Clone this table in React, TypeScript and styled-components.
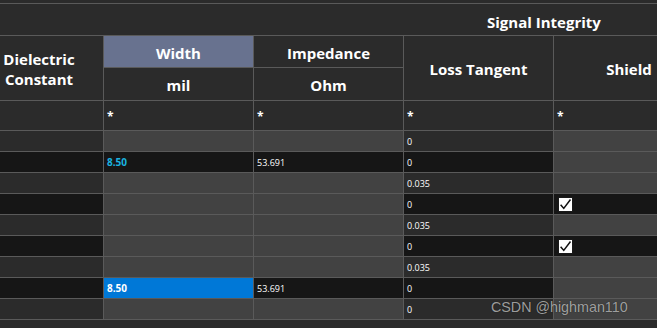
import React from 'react';
import styled, { createGlobalStyle } from 'styled-components';

// ============================================================
// GLOBAL
// ============================================================

const GlobalStyle = createGlobalStyle`
  html, body {
    margin: 0;
    padding: 0;
    background: #2b2b2b;
  }
  * {
    box-sizing: border-box;
  }
`;

const colors = {
  bg: '#2b2b2b',
  line: '#5a5a5a',
  readOnly: '#424242',
  dark: '#161616',
  activeHeader: '#68728f',
  selected: '#0078d7',
  accent: '#1ab4e0',
};

// ============================================================
// STYLED COMPONENTS
// ============================================================

const Page = styled.div`
  position: relative;
  width: 657px;
  height: 328px;
  overflow: hidden;
  background: ${colors.bg};
  font-family: 'Open Sans', 'Noto Sans', 'Liberation Sans', sans-serif;
  color: #ffffff;
  padding-top: 3px;
`;

const GroupBand = styled.div`
  height: 33px;
  border-top: 1px solid ${colors.line};
  border-bottom: 1px solid ${colors.line};
  display: flex;
  align-items: center;
  padding-left: 487px;
  padding-top: 4px;
  font-size: 15px;
  font-weight: 700;
  white-space: nowrap;
`;

const Grid = styled.div`
  display: grid;
  grid-template-columns: 128px 149px 149px 149px 150px;
  grid-template-rows: 31px 32px 29px repeat(9, 20px);
  gap: 1px;
  margin-left: -25px;
  width: max-content;
  background: ${colors.line};
  border-bottom: 1px solid ${colors.line};
`;

const HeaderCell = styled.div<{ $active?: boolean; $span?: number }>`
  grid-row: span ${({ $span }) => $span ?? 1};
  display: flex;
  align-items: center;
  justify-content: center;
  text-align: center;
  font-size: 15px;
  font-weight: 700;
  line-height: 20px;
  padding-top: 2px;
  background: ${({ $active }) => ($active ? colors.activeHeader : colors.bg)};
`;

const FilterCell = styled.div`
  display: flex;
  align-items: center;
  padding-left: 3px;
  padding-top: 2px;
  font-size: 12px;
  font-weight: 700;
  background: ${colors.bg};
`;

type Tone = 'base' | 'gray' | 'dark' | 'selected';

const toneBg: Record<Tone, string> = {
  base: colors.bg,
  gray: colors.readOnly,
  dark: colors.dark,
  selected: colors.selected,
};

const Cell = styled.div<{ $tone: Tone; $accent?: boolean; $bold?: boolean }>`
  display: flex;
  align-items: center;
  padding-left: 3px;
  font-size: ${({ $bold }) => ($bold ? '10px' : '9px')};
  font-weight: ${({ $bold }) => ($bold ? 700 : 400)};
  background: ${({ $tone }) => toneBg[$tone]};
  color: ${({ $accent }) => ($accent ? colors.accent : '#ffffff')};
  white-space: nowrap;
`;

const CheckBox = styled.span`
  width: 15px;
  height: 15px;
  margin-left: 1px;
  background: #ffffff;
  border: 1px solid #1a1a1a;
  display: flex;
  align-items: center;
  justify-content: center;
`;

const Watermark = styled.div`
  position: absolute;
  left: 491px;
  top: 299px;
  font-family: 'Liberation Sans', Arial, sans-serif;
  font-size: 14.3px;
  line-height: 17px;
  color: rgba(195, 195, 195, 0.8);
  text-shadow: 0 0 1px rgba(0, 0, 0, 0.7);
  white-space: nowrap;
`;

// ============================================================
// DATA
// ============================================================

interface Row {
  dark: boolean;
  width?: string;
  widthSelected?: boolean;
  impedance?: string;
  loss: string;
  shield?: boolean;
}

const rows: Row[] = [
  { dark: false, loss: '0' },
  { dark: true, width: '8.50', impedance: '53.691', loss: '0' },
  { dark: false, loss: '0.035' },
  { dark: true, loss: '0', shield: true },
  { dark: false, loss: '0.035' },
  { dark: true, loss: '0', shield: true },
  { dark: false, loss: '0.035' },
  { dark: true, width: '8.50', widthSelected: true, impedance: '53.691', loss: '0' },
  { dark: false, loss: '0' },
];

function Check() {
  return (
    <CheckBox>
      <svg width="13" height="13" viewBox="0 0 12 12" fill="none" stroke="#111" strokeWidth="1.4">
        <path d="M1.5 6.2 L4.4 9.6 L10.6 1.4" />
      </svg>
    </CheckBox>
  );
}

// ============================================================
// COMPONENT
// ============================================================

export default function App() {
  return (
    <Page>
      <GlobalStyle />
      <GroupBand>Signal Integrity</GroupBand>
      <Grid>
        <HeaderCell $span={2}>
          Dielectric
          <br />
          Constant
        </HeaderCell>
        <HeaderCell $active>Width</HeaderCell>
        <HeaderCell>Impedance</HeaderCell>
        <HeaderCell $span={2}>Loss Tangent</HeaderCell>
        <HeaderCell $span={2}>Shield</HeaderCell>
        <HeaderCell>mil</HeaderCell>
        <HeaderCell>Ohm</HeaderCell>

        <FilterCell />
        <FilterCell>*</FilterCell>
        <FilterCell>*</FilterCell>
        <FilterCell>*</FilterCell>
        <FilterCell>*</FilterCell>

        {rows.map((r, i) => {
          const hasValues = !!r.width;
          const widthTone: Tone = r.widthSelected ? 'selected' : hasValues ? 'dark' : 'gray';
          return (
            <React.Fragment key={i}>
              <Cell $tone={r.dark ? 'dark' : 'base'} />
              <Cell $tone={widthTone} $bold $accent={hasValues && !r.widthSelected}>
                {r.width}
              </Cell>
              <Cell $tone={hasValues ? 'dark' : 'gray'}>{r.impedance}</Cell>
              <Cell $tone={r.dark ? 'dark' : 'base'}>{r.loss}</Cell>
              <Cell $tone={r.shield ? 'dark' : 'gray'}>{r.shield && <Check />}</Cell>
            </React.Fragment>
          );
        })}
      </Grid>
      <Watermark>CSDN @highman110</Watermark>
    </Page>
  );
}
